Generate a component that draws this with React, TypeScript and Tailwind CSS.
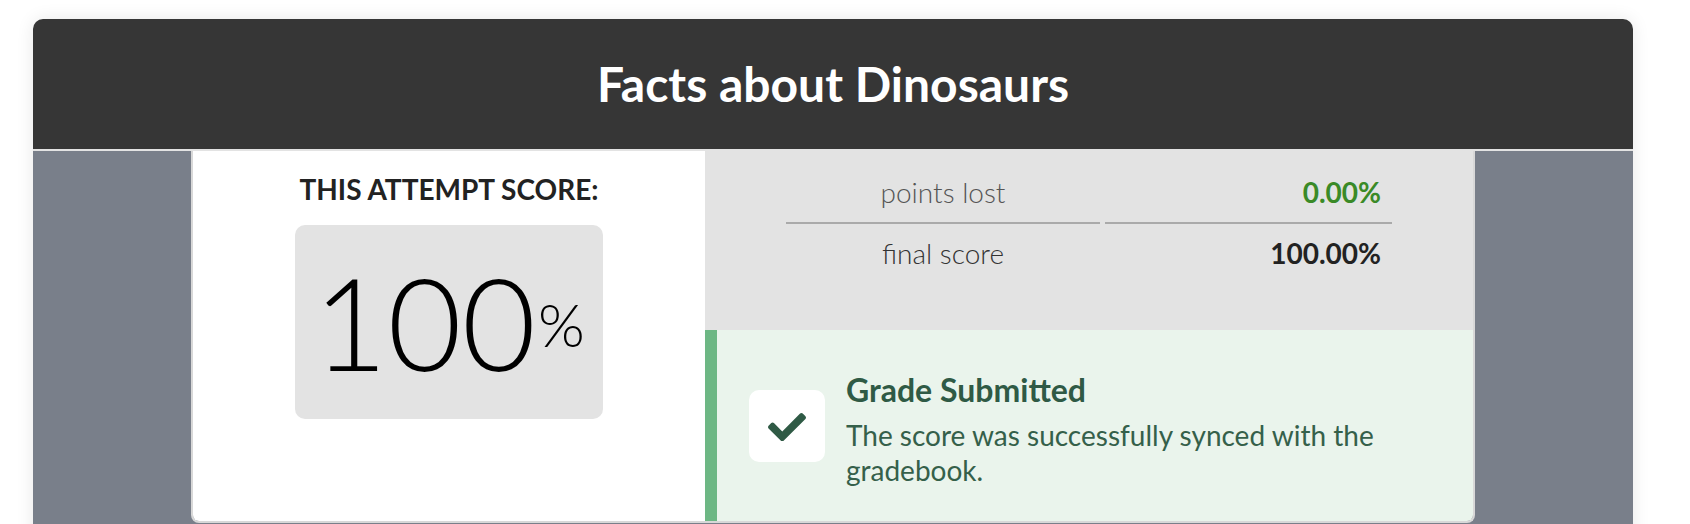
import React from "react";

function CheckIcon() {
  return (
    <svg width="38" height="30" viewBox="0 0 512 400" fill="#2f5a45" aria-hidden="true">
      <path d="M173.898 399.404l-166.4-166.4c-9.997-9.997-9.997-26.206 0-36.204l36.203-36.204c9.997-9.998 26.207-9.998 36.204 0L192 272.69 432.095 32.596c9.997-9.997 26.207-9.997 36.204 0l36.203 36.204c9.997 9.997 9.997 26.206 0 36.204l-294.4 294.401c-9.998 9.997-26.207 9.997-36.204-.001z" />
    </svg>
  );
}

export default function App() {
  return (
    <div className="h-[524px] overflow-hidden bg-white pt-[19px] font-['Lato',sans-serif]">
      <div className="ml-[33px] w-[1600px] rounded-t-[10px] shadow-[0_0_18px_rgba(0,0,0,0.09)]">
        <div className="flex h-[130px] items-center justify-center rounded-t-[10px] bg-[#363636]">
          <h1 className="text-[48px] font-bold leading-none text-white">Facts about Dinosaurs</h1>
        </div>
        <div className="border-t-2 border-[#e3e3e3] bg-[#797f8a] pb-[40px]">
          <div className="mx-auto flex w-[1284px] overflow-hidden rounded-b-[8px] border-2 border-t-0 border-[#d8d8d8]">
            <div className="flex w-[512px] flex-col items-center bg-white pt-[24px]">
              <div className="text-[28px] font-bold leading-[28px] text-[#222]">THIS ATTEMPT SCORE:</div>
              <div className="mt-[22px] flex h-[194px] w-[308px] items-center justify-center rounded-[10px] bg-[#e3e3e3]">
                <div className="flex items-start text-black">
                  <span className="text-[128px] font-light leading-none">100</span>
                  <span className="ml-[2px] mt-[36px] text-[60px] font-light leading-none">%</span>
                </div>
              </div>
            </div>
            <div className="flex flex-1 flex-col">
              <div className="flex h-[179px] justify-center bg-[#e3e3e3] pt-[11px]">
                <div className="grid h-fit grid-cols-[314px_287px] gap-x-[5px] text-[28px]">
                  <div className="border-b-2 border-[#aaaaaa] py-[12px] text-center font-light leading-[36px] text-[#555]">
                    points lost
                  </div>
                  <div className="border-b-2 border-[#aaaaaa] py-[12px] pr-[11px] text-right font-bold leading-[36px] text-[#3a8a27]">
                    0.00%
                  </div>
                  <div className="pt-[11px] text-center font-light leading-[36px] text-[#333]">final score</div>
                  <div className="pt-[11px] pr-[11px] text-right font-bold leading-[36px] text-[#222]">100.00%</div>
                </div>
              </div>
              <div className="flex h-[191px] items-center border-l-[12px] border-[#6db784] bg-[#eaf4ec] pl-[32px] pr-[32px]">
                <div className="flex h-[72px] w-[76px] shrink-0 items-center justify-center rounded-[10px] bg-white">
                  <CheckIcon />
                </div>
                <div className="ml-[21px] flex-1 pt-[6px] text-[#2f5a45]">
                  <div className="text-[32px] font-bold leading-[41px]">Grade Submitted</div>
                  <div className="mt-[8px] text-[28px] leading-[35px] text-[#35604a]">
                    The score was successfully synced with the gradebook.
                  </div>
                </div>
              </div>
            </div>
          </div>
        </div>
      </div>
    </div>
  );
}
